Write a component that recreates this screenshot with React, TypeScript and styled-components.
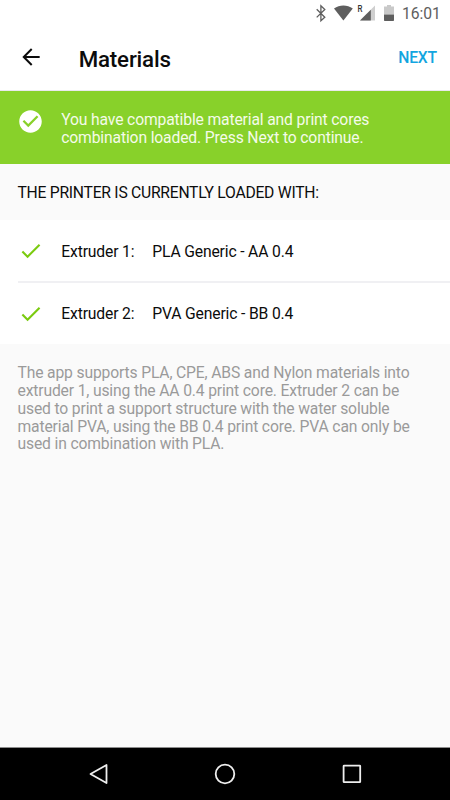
import React from "react";
import styled, { createGlobalStyle } from "styled-components";

const GlobalStyle = createGlobalStyle`
  * { box-sizing: border-box; }
  body { margin: 0; background: #fafafa; font-family: Roboto, "Liberation Sans", sans-serif; }
`;

const Screen = styled.div`
  width: 450px;
  height: 800px;
  display: flex;
  flex-direction: column;
  overflow: hidden;
  background: #fafafa;
  color: #0c0c0c;
  font-size: 15.7px;
  letter-spacing: -0.16px;
  line-height: 17.85px;
`;

const StatusBar = styled.div`
  height: 27px;
  flex: none;
  padding-right: 10px;
  display: flex;
  align-items: center;
  justify-content: flex-end;
  background: #fff;
`;

const StatusIcons = styled.svg`
  display: block;
  width: 84px;
  height: 27px;
`;

const Clock = styled.time`
  width: 38px;
  margin-left: 8px;
  padding-top: 1px;
  letter-spacing: -0.05px;
  white-space: nowrap;
  color: #5e5e5e;
`;

const AppBar = styled.header`
  height: 64px;
  flex: none;
  display: flex;
  align-items: center;
  padding: 0 13px 4px 17.7px;
  background: #fff;
  border-bottom: 1px solid #e9e9ec;
`;

const PlainButton = styled.button`
  border: 0;
  padding: 0;
  background: none;
  font: inherit;
  display: flex;
`;

const Title = styled.h1`
  margin: 0 auto 0 35px;
  padding-top: 4px;
  font-size: 22.3px;
  letter-spacing: -0.17px;
  line-height: 26px;
  font-weight: 500;
`;

const NextButton = styled(PlainButton)`
  color: #12a5e0;
  letter-spacing: -0.16px;
  font-weight: 500;
  padding-top: 3px;
`;

const Icon = styled.svg<{ $size: number }>`
  display: block;
  flex: none;
  width: ${(p) => p.$size}px;
  height: ${(p) => p.$size}px;
`;

const Banner = styled.section`
  height: 73px;
  flex: none;
  display: flex;
  align-items: flex-start;
  padding: 17px 17px 0 17.25px;
  background: #88d12a;
  color: #f4fbe9;
`;

const BannerText = styled.p`
  margin: 3px 0 0 17px;
  white-space: pre-line;
  letter-spacing: -0.15px;
`;

const SectionTitle = styled.h2`
  height: 56px;
  flex: none;
  margin: 0;
  padding: 20px 17.5px 0;
  font-size: 15.7px;
  letter-spacing: -0.26px;
  font-weight: 400;
`;

const List = styled.ul`
  list-style: none;
  flex: none;
  margin: 0;
  padding: 0 0 0 17.5px;
  background: #fff;
`;

const Row = styled.li`
  height: 62px;
  display: flex;
  align-items: center;
  padding-left: 0.3px;

  & + & {
    border-top: 2px solid #f0f0f3;
    margin-top: -1px;
    height: 63px;
  }
`;

const Slot = styled.span`
  width: 91px;
  margin-left: 18px;
  padding-top: 1px;
`;

const Material = styled.span`
  padding-top: 1px;
`;

const Note = styled.p`
  flex: 1;
  margin: 0;
  padding: 20px 17.5px 0;
  color: #9a9a9a;
  white-space: pre-line;
`;

const NavBar = styled.nav`
  height: 53px;
  flex: none;
  display: flex;
  align-items: center;
  justify-content: space-between;
  padding: 0 86px;
  background: #000;
  border-top: 1px solid #8c8c8c;
`;

const slots = [
  { name: "Extruder 1:", material: "PLA Generic - AA 0.4" },
  { name: "Extruder 2:", material: "PVA Generic - BB 0.4" },
];

export default function App() {
  return (
    <Screen>
      <GlobalStyle />
      <StatusBar>
        <StatusIcons viewBox="310 0 84 27">
          <path d="M316.7 9.3 324.8 17.2 320.9 20.7V5.8L324.8 9.4 316.7 17.4" fill="none" stroke="#5e5e5e" strokeWidth="1.3" />
          <path d="M334 8.4C339.6 4.5 347.2 4.5 352.8 8.4L343.4 20.6Z" fill="#5e5e5e" />
          <text x="357.4" y="12" fontSize="8.4" fontWeight="500" fill="#333" textLength="4.8" lengthAdjust="spacingAndGlyphs">R</text>
          <path d="M375 5.6V20.6H360Z" fill="#cfcfcf" />
          <path d="M370.8 9.8V20.6H360Z" fill="#5e5e5e" />
          <path d="M384 6.6H387V5H391V6.6H394V14.5H384Z" fill="#c9c9c9" />
          <path d="M384 14.4H394V20C394 20.6 393.6 21 393 21H385C384.4 21 384 20.6 384 20Z" fill="#5e5e5e" />
        </StatusIcons>
        <Clock>16:01</Clock>
      </StatusBar>
      <AppBar>
        <PlainButton aria-label="Back">
          <Icon $size={26} viewBox="0 0 24 24">
            <path d="M20 11.1H7.6l5.7-5.8L12 4l-8 8 8 8 1.3-1.3L7.6 12.9H20z" fill="#0c0c0c" />
          </Icon>
        </PlainButton>
        <Title>Materials</Title>
        <NextButton>NEXT</NextButton>
      </AppBar>
      <Banner>
        <Icon $size={27} viewBox="0 0 24 24">
          <path d="M12 2C6.48 2 2 6.48 2 12s4.48 10 10 10 10-4.48 10-10S17.52 2 12 2zm-2 15l-5-5 1.41-1.41L10 14.17l7.59-7.59L19 8l-9 9z" fill="#fff" />
        </Icon>
        <BannerText>{"You have compatible material and print cores\ncombination loaded. Press Next to continue."}</BannerText>
      </Banner>
      <SectionTitle>THE PRINTER IS CURRENTLY LOADED WITH:</SectionTitle>
      <List>
        {slots.map((s) => (
          <Row key={s.name}>
            <Icon $size={25.5} viewBox="0 0 24 24">
              <path d="M9 16.17L4.83 12l-1.42 1.41L9 19 21 7l-1.41-1.41z" fill="#7bcb10" />
            </Icon>
            <Slot>{s.name}</Slot>
            <Material>{s.material}</Material>
          </Row>
        ))}
      </List>
      <Note>
        {"The app supports PLA, CPE, ABS and Nylon materials into\nextruder 1, using the AA 0.4 print core. Extruder 2 can be\nused to print a support structure with the water soluble\nmaterial PVA, using the BB 0.4 print core. PVA can only be\nused in combination with PLA."}
      </Note>
      <NavBar>
        <Icon $size={24} viewBox="0 0 24 24">
          <path d="M20.5 3V21L4.5 12Z" fill="none" stroke="#eee" strokeWidth="1.8" strokeLinejoin="round" />
        </Icon>
        <Icon $size={24} viewBox="0 0 24 24">
          <circle cx="12" cy="12" r="9.3" fill="none" stroke="#eee" strokeWidth="1.8" />
        </Icon>
        <Icon $size={24} viewBox="0 0 24 24">
          <rect x="3.6" y="3.6" width="16.6" height="16.6" rx="0.5" fill="none" stroke="#eee" strokeWidth="1.8" />
        </Icon>
      </NavBar>
    </Screen>
  );
}
